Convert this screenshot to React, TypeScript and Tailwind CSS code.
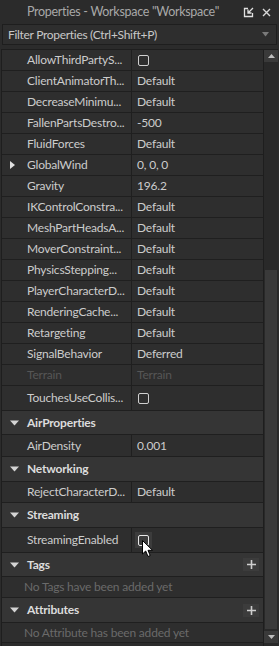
import React from 'react';

type Row =
  | { kind: 'prop'; name: string; value?: string; check?: boolean; h: string; expand?: boolean; disabled?: boolean; hover?: boolean }
  | { kind: 'head'; name: string; h: string; plus?: boolean }
  | { kind: 'empty'; text: string; h: string };

const rows: Row[] = [
  { kind: 'prop', name: 'AllowThirdPartyS...', check: true, h: 'h-[21px]' },
  { kind: 'prop', name: 'ClientAnimatorTh...', value: 'Default', h: 'h-[21px]' },
  { kind: 'prop', name: 'DecreaseMinimu...', value: 'Default', h: 'h-[21px]' },
  { kind: 'prop', name: 'FallenPartsDestro...', value: '-500', h: 'h-[21px]' },
  { kind: 'prop', name: 'FluidForces', value: 'Default', h: 'h-[21px]' },
  { kind: 'prop', name: 'GlobalWind', value: '0, 0, 0', h: 'h-[21px]', expand: true },
  { kind: 'prop', name: 'Gravity', value: '196.2', h: 'h-[21px]' },
  { kind: 'prop', name: 'IKControlConstra...', value: 'Default', h: 'h-[21px]' },
  { kind: 'prop', name: 'MeshPartHeadsA...', value: 'Default', h: 'h-[21px]' },
  { kind: 'prop', name: 'MoverConstraint...', value: 'Default', h: 'h-[21px]' },
  { kind: 'prop', name: 'PhysicsStepping...', value: 'Default', h: 'h-[21px]' },
  { kind: 'prop', name: 'PlayerCharacterD...', value: 'Default', h: 'h-[21px]' },
  { kind: 'prop', name: 'RenderingCache...', value: 'Default', h: 'h-[21px]' },
  { kind: 'prop', name: 'Retargeting', value: 'Default', h: 'h-[21px]' },
  { kind: 'prop', name: 'SignalBehavior', value: 'Deferred', h: 'h-[21px]' },
  { kind: 'prop', name: 'Terrain', value: 'Terrain', h: 'h-[21px]', disabled: true },
  { kind: 'prop', name: 'TouchesUseCollis...', check: true, h: 'h-[25px]' },
  { kind: 'head', name: 'AirProperties', h: 'h-[24px]' },
  { kind: 'prop', name: 'AirDensity', value: '0.001', h: 'h-[22px]' },
  { kind: 'head', name: 'Networking', h: 'h-[25px]' },
  { kind: 'prop', name: 'RejectCharacterD...', value: 'Default', h: 'h-[21px]' },
  { kind: 'head', name: 'Streaming', h: 'h-[25px]' },
  { kind: 'prop', name: 'StreamingEnabled', check: true, h: 'h-[25px]', hover: true },
  { kind: 'head', name: 'Tags', h: 'h-[24px]', plus: true },
  { kind: 'empty', text: 'No Tags have been added yet', h: 'h-[21px]' },
  { kind: 'head', name: 'Attributes', h: 'h-[25px]', plus: true },
  { kind: 'empty', text: 'No Attribute has been added yet', h: 'h-[20px]' },
];

const Checkbox = ({ hover }: { hover?: boolean }) => (
  <div className={`flex items-center justify-center w-[17px] h-[16px] ${hover ? 'bg-[#3c3c3c]' : ''}`}>
    <div className={`w-[11px] h-[11px] rounded-[2px] border ${hover ? 'border-[#e8e8e8]' : 'border-[#cfcfcf]'}`} />
  </div>
);

const DownTri = () => (
  <svg width="9" height="6" viewBox="0 0 9 6">
    <path d="M0 0.5 L9 0.5 L4.5 5.5 Z" fill="#d4d4d4" />
  </svg>
);

export default function App() {
  return (
    <div className="w-[279px] h-[646px] bg-[#2b2b2b] flex flex-col overflow-hidden text-[12px] tracking-[-0.2px] font-['Lato','Liberation_Sans',sans-serif]">
      {/* Title bar */}
      <div className="h-[24px] flex items-center pl-[27px] pr-[8px] text-[#a8a8a8] text-[12.5px] tracking-[-0.3px]">
        <span className="flex-1 whitespace-nowrap">Properties - Workspace "Workspace"</span>
        <svg width="11" height="11" viewBox="0 0 11 11" className="mr-[8px]">
          <path d="M5 1.5 H1.5 V9.5 H9.5 V6" stroke="#e0e0e0" strokeWidth="1.3" fill="none" />
          <path d="M10 1 L5 6 M5 2.5 V6 H8.5" stroke="#e0e0e0" strokeWidth="1.3" fill="none" />
        </svg>
        <svg width="9" height="9" viewBox="0 0 9 9">
          <path d="M1 1 L8 8 M8 1 L1 8" stroke="#d8d8d8" strokeWidth="1.4" />
        </svg>
      </div>

      {/* Filter */}
      <div className="mx-[2px] h-[21px] flex items-center border border-[#1e1e1e] bg-[#2e2e2e] pl-[5px] pr-[7px] text-[#c8c8c8] text-[12px] tracking-[-0.3px]">
        <span className="flex-1 whitespace-nowrap">Filter Properties (Ctrl+Shift+P)</span>
        <svg width="7" height="5" viewBox="0 0 7 5">
          <path d="M0 0 L7 0 L3.5 4.5 Z" fill="#7a7a7a" />
        </svg>
      </div>

      {/* List + scrollbar */}
      <div className="mt-[4px] mx-[1px] flex flex-1 min-h-0 border-t border-l border-[#1e1e1e]">
        <div className="w-[262px] flex flex-col border-r border-[#1e1e1e]">
          {rows.map((r, i) => {
            if (r.kind === 'head') {
              return (
                <div key={i} className={`${r.h} flex items-center bg-[#353535] border-b border-[#1f1f1f] font-bold text-[#dcdcdc]`}>
                  <span className="w-[25px] shrink-0 pl-[8px] flex items-center"><DownTri /></span>
                  <span className="flex-1">{r.name}</span>
                  {r.plus && (
                    <span className="mr-[4px] w-[16px] h-[13px] bg-[#3c3c3c] flex items-center justify-center">
                      <svg width="9" height="9" viewBox="0 0 9 9">
                        <path d="M4.5 0 V9 M0 4.5 H9" stroke="#cfcfcf" strokeWidth="1.6" />
                      </svg>
                    </span>
                  )}
                </div>
              );
            }
            if (r.kind === 'empty') {
              return (
                <div key={i} className={`${r.h} flex items-center pl-[22px] bg-[#2e2e2e] border-b border-[#1f1f1f] text-[#6a6a6a]`}>
                  {r.text}
                </div>
              );
            }
            const textCol = r.disabled ? 'text-[#565656]' : 'text-[#cccccc]';
            return (
              <div key={i} className={`${r.h} flex bg-[#2e2e2e] border-b border-[#1f1f1f]`}>
                <div className={`w-[130px] shrink-0 flex items-center border-r border-[#1f1f1f] whitespace-nowrap overflow-hidden ${textCol}`}>
                  <span className="w-[25px] shrink-0 pl-[8px] flex items-center">
                    {r.expand && (
                      <svg width="5" height="8" viewBox="0 0 5 8">
                        <path d="M0 0 L5 4 L0 8 Z" fill="#e0e0e0" />
                      </svg>
                    )}
                  </span>
                  <span>{r.name}</span>
                </div>
                <div className={`flex-1 flex items-center pl-[5px] ${textCol}`}>
                  {r.check ? <div className="relative -ml-[2px]"><Checkbox hover={r.hover} />
                    {r.hover && (
                      <svg width="12" height="18" viewBox="0 0 12 18" className="absolute left-[7px] top-[8px]">
                        <path d="M0.5 0.5 L0.5 14 L3.7 11 L6 16.5 L8.2 15.5 L6 10.3 L10.5 10.3 Z" fill="#ffffff" stroke="#000000" strokeWidth="1" />
                      </svg>
                    )}
                  </div> : r.value}
                </div>
              </div>
            );
          })}
        </div>
        {/* Scrollbar */}
        <div className="w-[14px] flex flex-col bg-[#292929]">
          <div className="h-[12px] bg-[#3a3a3a] flex items-center justify-center">
            <svg width="7" height="4" viewBox="0 0 7 4"><path d="M0 4 L7 4 L3.5 0 Z" fill="#bdbdbd" /></svg>
          </div>
          <div className="h-[208px]" />
          <div className="flex-1 bg-[#3a3a3a] mx-[1px]" />
          <div className="h-[12px] mt-[2px] mb-[3px] bg-[#3a3a3a] flex items-center justify-center">
            <svg width="7" height="4" viewBox="0 0 7 4"><path d="M0 0 L7 0 L3.5 4 Z" fill="#bdbdbd" /></svg>
          </div>
        </div>
      </div>
    </div>
  );
}
